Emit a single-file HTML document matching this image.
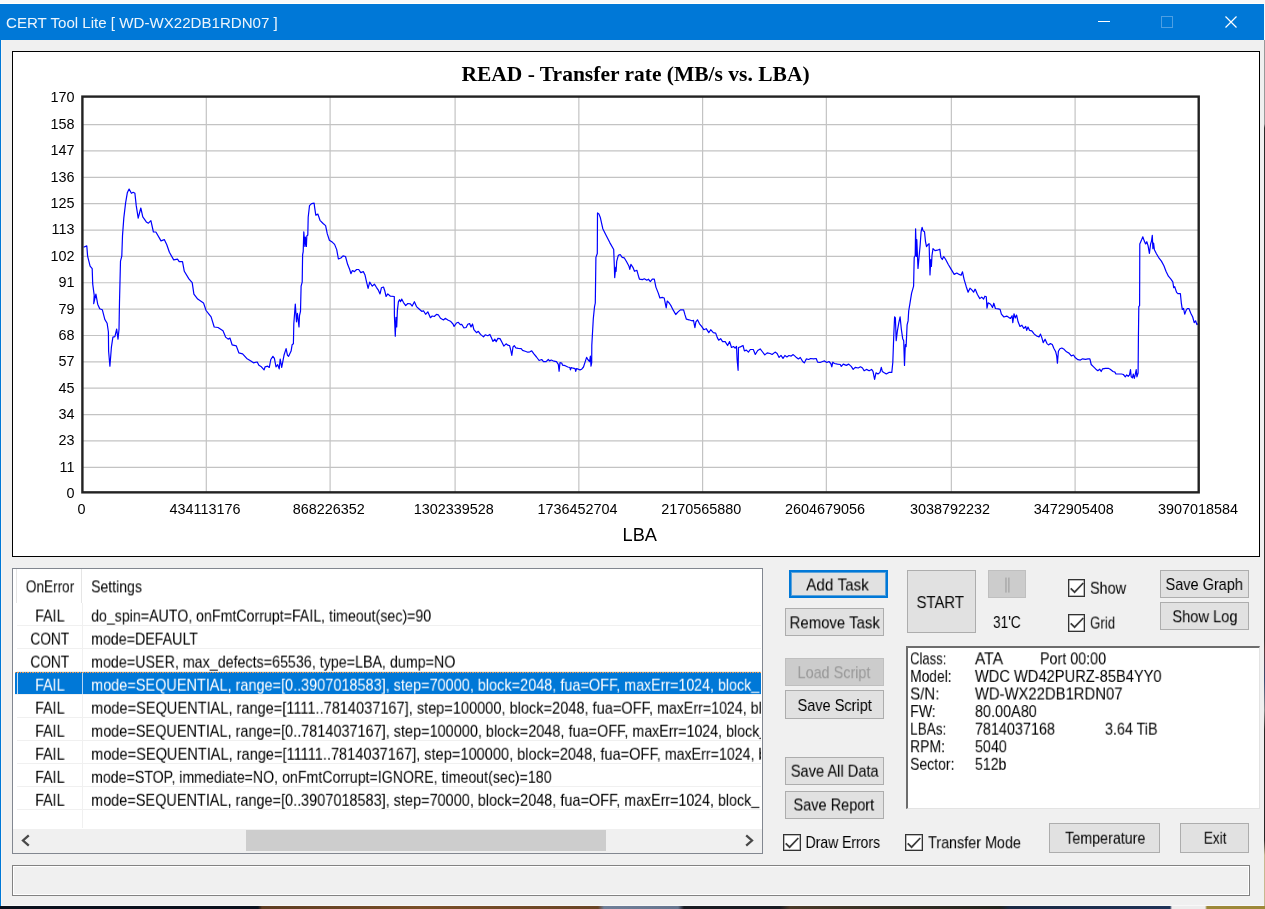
<!DOCTYPE html>
<html lang="en">
<head>
<meta charset="utf-8">
<title>CERT Tool Lite [ WD-WX22DB1RDN07 ]</title>
<style>
*{box-sizing:border-box;margin:0;padding:0}
html,body{width:1265px;height:909px;overflow:hidden;background:#f9f9f9}
body{position:relative;font-family:"Liberation Sans",sans-serif;font-size:15.5px;color:#000}
.abs{position:absolute}
.t{position:absolute;left:0;top:0;will-change:transform;white-space:pre;line-height:20px;height:20px;transform-origin:0 0;font-size:17px}
#deskr{left:1264px;top:40px;width:1px;height:869px;background:linear-gradient(180deg,#9a9a9a 0,#9a9a9a 84px,#2c2a2a 88px,#3a3432 600px,#5a3a3a 610px,#3a4a70 640px,#8a8a8a 670px,#2a2624 690px,#2a2624 800px,#c8b890 815px,#c8b890 869px)}
#deskb{left:0;top:906px;width:1265px;height:3px;background:linear-gradient(90deg,#0b111d 0,#0b111d 258px,#5d3d22 262px,#7a4f28 420px,#6a4526 598px,#707f98 604px,#66758e 678px,#1a1c22 684px,#1a1c22 780px,#4a3a28 790px,#3a3226 870px,#22241f 1000px,#1b2a44 1010px,#1f3358 1170px,#ededed 1172px,#ededed 1205px,#9d8838 1207px,#9d8838 1265px)}
#win{left:0;top:4px;width:1264px;height:902px;background:#f0f0f0;border-left:1px solid #0078d7;box-shadow:inset 1px 0 #f8f5f2,inset 0 -1px #f8f8f8}
#topw{left:0;top:3px;width:1265px;height:1px;background:#fffffc}
#tbar{left:0;top:4px;width:1264px;height:36px;background:#0078d7;color:rgba(255,255,255,.93)}
#ttext{will-change:transform;transform:translateY(.8px);left:6px;top:9px;font-size:15.1px;white-space:nowrap;line-height:18px}
#chart{left:12px;top:51px;width:1248px;height:506px;background:#fff;border:1px solid #000}
.btn{position:absolute;background:#e1e1e1;border:1px solid #adadad}
.btn.dis{background:#cccccc;border-color:#bfbfbf}
.btn.focus{border:2px solid #0078d7;box-shadow:inset 0 0 0 1px rgba(0,120,215,.6)}
.cb{position:absolute;width:17.5px;height:17.5px;background:#fff;border:1px solid #333;box-shadow:inset 0 0 0 .5px #777}
.cb svg{display:block;position:absolute;left:-1px;top:-1px}
#list{left:12px;top:568px;width:751px;height:286px;background:#fff;border:1px solid #828790;overflow:hidden}
#list .hl{width:1px;background:#e5e5e5}
.row{position:absolute;left:4px;width:744px;white-space:nowrap;overflow:hidden;border-bottom:1px solid #f0f0f0}
.row .c2{position:absolute;left:70px;top:0;height:23px;width:677px;overflow:hidden}
.row .vs{position:absolute;left:65px;top:0;width:1px;height:23px;background:#f0f0f0}
.row.sel{background:#0078d7;background-clip:padding-box;left:2px;width:746px}
.row.sel .c2{left:72px;width:674px}
.row.sel>.t{margin-left:2px}
.row.sel .vs{left:67px;background:#b5d5f3}
.row.sel::before{content:'';position:absolute;left:2px;top:0;width:1px;height:23px;background:#c5def5}
.row.sel::after{content:'';position:absolute;left:0;top:0;width:746px;height:1px;background:repeating-linear-gradient(90deg,#ee9a55 0,#ee9a55 1.25px,#0078d7 1.25px,#0078d7 2.5px)}
#hsb{left:0;top:260px;width:749px;height:24px;background:#f0f0f0}
#thumb{left:233px;top:1px;width:360px;height:21px;background:#cdcdcd}
#info{left:905.600px;top:646.300px;width:354.400px;height:163.200px;background:#fff;border-top:2.4px solid #6d6d6d;border-left:2.4px solid #6d6d6d;border-right:1px solid #e3e3e3;border-bottom:1px solid #e3e3e3}
#status{left:12px;top:865px;width:1238px;height:31px;border:1px solid #828282;box-shadow:inset 1px 1px 0 #fff,inset -1px -1px 0 #fff}
.u{font-style:normal;position:relative;top:-1.5px}

</style>
</head>
<body>
<div id="deskr" class="abs"></div>
<div id="deskb" class="abs"></div>
<div id="topw" class="abs"></div>
<div id="win" class="abs"></div>
<div id="tbar" class="abs">
<div id="ttext" class="abs">CERT Tool Lite [ WD-WX22DB1RDN07 ]</div>
<svg class="abs" style="left:1087px;top:0" width="177" height="36" viewBox="0 0 177 36">
<path d="M11 17.500H23" stroke="#fff" stroke-width="1" fill="none"/>
<rect x="74.500" y="12.500" width="11" height="11" stroke="#4d9fe3" stroke-width="1" fill="none"/>
<path d="M138.500 12.500L149.500 23.500M149.500 12.500L138.500 23.500" stroke="#fff" stroke-width="1.2" fill="none"/>
</svg>
</div>
<div id="chart" class="abs"></div>
<svg class="abs" style="left:0;top:0;will-change:transform" width="1265" height="560" viewBox="0 0 1265 560" font-family="'Liberation Sans',sans-serif" font-size="14.4" fill="#000">
<g stroke="#c3c3c3" stroke-width="1.2">
<line x1="206.30" y1="96.60" x2="206.30" y2="492.35"/>
<line x1="330.10" y1="96.60" x2="330.10" y2="492.35"/>
<line x1="455.10" y1="96.60" x2="455.10" y2="492.35"/>
<line x1="578.85" y1="96.60" x2="578.85" y2="492.35"/>
<line x1="702.60" y1="96.60" x2="702.60" y2="492.35"/>
<line x1="826.35" y1="96.60" x2="826.35" y2="492.35"/>
<line x1="951.35" y1="96.60" x2="951.35" y2="492.35"/>
<line x1="1075.10" y1="96.60" x2="1075.10" y2="492.35"/>
<line x1="82.40" y1="124.60" x2="1198.70" y2="124.60"/>
<line x1="82.40" y1="150.96" x2="1198.70" y2="150.96"/>
<line x1="82.40" y1="177.32" x2="1198.70" y2="177.32"/>
<line x1="82.40" y1="203.68" x2="1198.70" y2="203.68"/>
<line x1="82.40" y1="230.04" x2="1198.70" y2="230.04"/>
<line x1="82.40" y1="256.40" x2="1198.70" y2="256.40"/>
<line x1="82.40" y1="282.76" x2="1198.70" y2="282.76"/>
<line x1="82.40" y1="309.12" x2="1198.70" y2="309.12"/>
<line x1="82.40" y1="335.48" x2="1198.70" y2="335.48"/>
<line x1="82.40" y1="361.84" x2="1198.70" y2="361.84"/>
<line x1="82.40" y1="388.20" x2="1198.70" y2="388.20"/>
<line x1="82.40" y1="414.56" x2="1198.70" y2="414.56"/>
<line x1="82.40" y1="440.92" x2="1198.70" y2="440.92"/>
<line x1="82.40" y1="467.28" x2="1198.70" y2="467.28"/>
</g>
<polyline fill="none" stroke="#0000ff" stroke-width="1.2" stroke-linejoin="round" points="83.5,247.2 86.8,245.9 87.6,256.1 90.1,266.2 92.2,268.7 92.7,283.9 94.2,295.3 93.7,303.7 95.9,294.1 97.7,304.2 99.7,308.7 102.3,309.7 104.8,319.4 107.1,323.2 108.4,332.0 108.6,351.0 109.9,366.2 111.4,347.2 112.9,337.1 114.9,336.6 116.7,329.0 118.0,339.1 119.0,329.5 119.5,301.6 120.5,261.1 121.8,256.1 122.5,235.8 123.8,218.1 125.6,202.9 127.3,192.8 129.1,189.0 131.4,193.3 133.2,192.3 134.9,193.3 136.2,205.4 138.2,218.1 140.8,208.0 142.8,216.8 146.3,221.9 148.4,223.2 150.9,220.6 153.4,232.0 155.9,232.0 161.0,240.9 164.3,239.6 166.8,244.7 169.4,252.3 173.7,259.9 177.5,259.1 179.2,261.6 182.5,261.6 184.3,271.3 188.9,278.9 192.2,282.7 193.9,294.1 197.7,299.1 203.5,302.9 206.1,310.5 209.1,314.3 211.1,316.8 214.2,327.0 218.0,327.5 223.0,330.8 225.6,337.1 228.1,339.1 230.0,338.1 232.1,344.8 236.3,345.9 238.8,352.8 242.6,353.8 246.7,358.4 250.9,361.1 253.4,362.8 257.2,362.0 258.9,365.3 261.4,366.8 264.1,369.9 265.1,366.8 267.7,366.2 269.3,367.4 270.8,359.5 272.9,356.3 274.4,358.4 276.0,366.8 277.7,364.7 279.2,368.9 280.2,359.0 281.7,367.4 284.0,355.3 286.1,348.6 287.5,355.3 288.6,356.3 291.1,351.1 292.1,344.8 293.4,343.8 293.8,323.9 295.3,304.0 296.5,321.8 297.4,313.4 299.0,327.0 299.5,315.5 300.5,311.3 301.1,286.2 302.2,282.1 302.6,254.9 303.2,251.7 303.8,231.8 304.9,246.5 305.3,237.1 306.4,246.5 306.8,236.0 307.8,235.0 308.2,217.2 309.5,205.7 311.6,203.6 314.1,203.2 314.7,207.8 315.8,215.1 317.9,214.1 320.0,220.3 323.1,223.5 325.6,225.6 327.3,233.9 329.4,240.2 332.5,242.3 334.6,244.4 336.7,249.6 338.4,259.0 340.9,258.0 343.0,255.9 345.5,256.5 347.6,264.3 349.7,269.5 350.9,273.7 352.4,270.5 354.5,271.6 356.6,269.5 358.7,269.5 360.8,272.6 363.3,271.6 364.9,274.7 366.6,282.1 368.1,288.3 369.7,282.1 372.3,286.2 374.4,284.1 376.4,287.3 378.5,290.4 380.0,293.9 381.4,287.8 383.5,287.0 384.9,291.3 386.1,296.5 387.8,293.9 390.4,296.2 394.3,296.5 394.4,315.7 395.3,336.2 396.0,317.4 396.7,327.0 397.4,310.4 398.4,301.7 399.5,299.7 400.5,301.7 401.7,299.1 403.5,302.6 405.7,305.6 407.8,303.5 410.4,303.8 412.2,306.1 414.4,301.7 416.5,306.6 419.1,309.0 421.7,311.3 423.5,310.8 425.6,314.3 427.8,311.8 430.4,317.7 432.2,316.0 434.3,316.5 436.5,314.3 438.3,314.8 440.5,318.3 443.5,320.0 445.2,318.3 447.8,320.0 450.4,321.2 453.0,324.0 454.1,326.4 456.5,323.0 458.3,322.3 460.3,324.7 461.7,324.3 463.8,327.8 466.1,327.5 467.8,324.3 469.6,323.5 471.0,327.0 472.5,324.0 473.9,329.6 476.5,332.7 478.3,331.3 480.5,334.4 483.5,336.9 485.2,334.8 487.8,335.7 489.9,334.4 491.3,337.4 493.0,341.4 494.8,339.1 496.2,341.7 497.9,338.3 500.0,338.6 501.7,341.7 503.8,346.1 506.1,343.8 507.8,345.2 509.6,345.6 510.8,350.4 511.8,355.3 513.0,347.0 514.3,345.6 515.7,347.8 518.3,348.3 521.2,348.7 522.6,350.4 525.2,351.3 527.8,352.2 529.9,351.8 531.7,350.8 533.9,353.9 536.5,357.0 539.1,360.5 541.7,359.5 543.5,361.7 546.1,361.7 548.3,359.5 549.6,360.9 551.3,360.0 553.9,361.2 556.5,361.7 558.3,364.3 559.1,371.3 560.0,362.6 561.7,363.0 562.6,365.2 565.2,365.7 567.8,367.0 569.9,367.5 570.4,369.9 571.3,367.5 573.0,368.2 575.1,368.7 575.7,371.3 576.5,368.7 578.3,369.2 580.0,369.9 581.7,369.2 583.5,367.0 584.9,362.6 586.6,357.4 587.8,359.5 589.6,361.7 590.4,356.0 591.0,366.1 591.7,362.6 591.8,345.2 593.3,318.8 594.5,306.9 595.3,303.0 595.9,257.4 597.3,253.5 597.5,212.9 598.9,213.9 600.4,217.8 602.8,228.7 605.8,234.7 609.8,242.6 613.7,249.5 614.3,265.3 614.7,277.6 615.7,267.3 616.1,271.3 616.7,261.4 618.3,255.4 620.2,254.5 622.2,257.4 624.2,257.8 626.6,261.8 629.0,266.3 629.8,269.3 630.9,264.4 632.9,267.3 634.5,271.3 636.9,270.3 638.5,276.2 639.5,279.2 642.4,279.6 644.4,278.8 646.8,280.2 648.4,279.2 650.3,281.6 652.3,279.2 654.3,279.2 655.9,287.1 658.3,293.1 659.9,298.0 662.2,297.4 664.2,298.0 666.2,307.9 667.2,301.0 669.2,303.0 671.1,305.9 673.1,309.9 675.7,314.5 678.1,311.9 680.4,309.9 683.6,309.9 685.0,314.9 686.4,319.2 689.0,319.8 691.9,320.8 693.5,320.4 694.9,327.7 695.9,321.8 697.5,319.8 699.5,323.8 701.8,326.7 703.8,329.7 706.2,328.7 708.8,332.7 710.7,329.7 713.3,332.7 715.7,333.1 717.3,337.6 718.7,340.2 720.6,338.6 722.6,341.6 725.2,341.6 727.6,345.5 729.6,341.6 731.5,347.5 733.5,346.5 735.1,348.1 736.5,346.5 737.1,359.4 738.1,370.3 738.5,347.5 740.4,346.9 743.0,345.5 744.4,350.9 746.4,350.1 748.4,352.1 750.3,349.5 753.3,349.5 755.3,354.5 757.7,350.5 760.2,348.9 762.2,351.5 764.8,354.9 767.2,352.9 770.1,353.5 772.1,354.5 775.1,352.1 777.1,353.5 779.1,357.4 781.0,355.4 783.0,358.4 784.9,355.5 786.9,356.9 788.9,355.5 791.2,356.1 793.2,354.6 795.8,356.9 798.4,358.9 800.3,357.5 802.7,361.5 804.3,362.9 806.3,358.9 808.7,359.5 810.6,358.5 813.6,358.9 816.2,358.5 817.6,362.1 820.1,362.5 822.5,361.5 824.5,360.9 826.9,362.5 828.9,361.5 830.8,363.5 831.8,366.8 832.8,362.1 834.4,363.5 837.4,364.1 840.3,364.5 841.3,366.4 843.3,364.1 846.3,365.4 848.7,364.1 851.2,366.4 853.2,369.4 855.2,367.4 858.2,368.0 860.5,366.8 862.5,368.0 864.1,370.8 866.5,369.4 869.1,370.8 871.6,369.4 873.0,371.4 874.6,379.3 876.0,372.8 878.0,374.0 880.0,372.4 881.3,367.4 882.3,371.4 884.3,372.8 886.3,374.0 888.9,372.4 891.8,372.4 892.8,362.5 893.8,334.8 894.6,316.9 895.4,317.9 896.2,340.7 897.4,330.8 898.8,322.9 900.1,316.9 901.3,328.8 902.7,338.7 903.7,340.7 904.5,365.4 905.3,344.7 906.1,346.6 907.1,324.9 908.1,320.9 908.7,311.0 910.0,303.1 911.6,293.2 913.6,286.2 914.2,257.5 915.2,255.5 915.6,228.8 916.4,256.5 916.8,239.7 918.0,268.4 919.2,255.5 920.1,245.6 921.1,231.8 922.1,227.4 923.1,230.8 924.5,231.8 925.5,241.7 926.5,246.6 927.9,244.7 929.1,243.7 930.0,275.0 930.8,259.5 931.4,266.4 932.0,255.5 933.0,248.6 935.0,250.6 937.4,250.2 939.8,249.2 940.9,257.5 942.3,259.5 943.7,256.5 945.7,259.5 948.3,264.5 951.2,269.4 954.2,274.4 956.8,273.0 959.2,274.4 961.1,275.3 962.5,271.8 964.1,279.3 966.1,286.2 968.1,292.2 970.0,288.2 972.0,290.2 973.6,292.2 975.0,289.2 975.4,289.5 977.3,294.3 979.8,298.6 981.7,297.1 983.6,299.0 984.9,296.2 986.3,296.7 987.0,308.1 988.1,302.8 990.6,304.3 992.5,307.5 993.8,303.2 995.4,308.5 998.2,308.9 1000.1,309.4 1001.4,314.2 1003.9,317.0 1006.7,316.1 1009.0,317.6 1010.5,318.4 1012.1,315.7 1012.8,322.7 1014.0,313.8 1015.3,318.0 1016.6,315.1 1018.1,321.8 1020.0,326.5 1021.9,325.2 1023.8,328.4 1025.7,326.5 1026.7,330.3 1028.0,327.1 1029.5,330.3 1031.8,330.9 1034.3,334.1 1036.7,336.0 1039.0,337.0 1040.5,334.1 1041.9,337.9 1043.2,342.6 1045.1,339.2 1047.0,343.6 1048.5,344.9 1050.4,343.6 1052.3,344.5 1053.8,348.3 1055.7,351.8 1056.7,355.9 1057.4,363.1 1058.4,351.2 1059.9,348.7 1061.8,348.0 1064.1,349.3 1066.5,351.8 1069.0,353.1 1071.3,355.9 1073.5,355.0 1075.4,357.8 1077.9,359.7 1080.4,360.1 1082.6,358.8 1085.5,359.3 1088.0,358.8 1089.9,358.8 1091.2,364.5 1093.1,366.4 1095.9,369.2 1097.8,370.7 1099.7,369.2 1101.2,371.5 1102.6,368.8 1105.4,368.3 1108.3,368.3 1110.2,369.2 1113.0,371.5 1114.9,372.1 1115.9,374.0 1118.7,374.0 1121.5,374.0 1123.4,374.5 1125.3,376.8 1126.7,374.9 1128.2,376.4 1129.5,374.9 1130.5,369.6 1131.2,376.8 1132.4,377.8 1133.3,374.0 1134.3,378.3 1135.2,374.9 1136.2,369.6 1136.9,376.8 1138.1,373.0 1138.4,338.9 1138.8,306.6 1139.6,305.6 1139.8,244.0 1141.1,241.1 1142.8,236.8 1144.3,241.1 1145.6,244.0 1146.8,241.7 1148.1,245.9 1149.4,253.5 1150.6,244.0 1151.5,241.1 1152.3,235.4 1152.9,248.7 1153.6,243.0 1154.4,249.7 1156.3,253.5 1158.5,257.3 1161.4,261.1 1163.9,265.8 1166.1,271.5 1168.4,276.2 1170.9,279.1 1172.8,281.9 1173.7,287.6 1174.7,286.7 1176.6,292.4 1177.9,293.7 1180.4,293.7 1181.3,302.8 1182.3,309.4 1183.6,308.5 1184.7,314.2 1186.1,310.4 1187.4,308.5 1188.9,308.5 1190.8,313.2 1192.7,317.0 1194.2,322.7 1195.6,320.8 1196.9,324.6 1198.0,323.7"/>
<rect x="82.40" y="96.60" width="1116.30" height="395.75" fill="none" stroke="#222" stroke-width="2.4"/>
<text x="635.5" y="81" text-anchor="middle" font-family="'Liberation Serif',serif" font-weight="bold" font-size="21.5">READ - Transfer rate (MB/s vs. LBA)</text>
<g text-anchor="end">
<text x="74.5" y="101.8">170</text>
<text x="74.5" y="128.9">158</text>
<text x="74.5" y="155.3">147</text>
<text x="74.5" y="181.7">136</text>
<text x="74.5" y="208.0">125</text>
<text x="74.5" y="234.4">113</text>
<text x="74.5" y="260.8">102</text>
<text x="74.5" y="287.1">91</text>
<text x="74.5" y="313.5">79</text>
<text x="74.5" y="339.8">68</text>
<text x="74.5" y="366.2">57</text>
<text x="74.5" y="392.6">45</text>
<text x="74.5" y="418.9">34</text>
<text x="74.5" y="445.3">23</text>
<text x="74.5" y="471.6">11</text>
<text x="74.5" y="498.0">0</text>
</g>
<g text-anchor="middle">
<text x="81.6" y="513.6">0</text>
<text x="205.0" y="513.6">434113176</text>
<text x="328.8" y="513.6">868226352</text>
<text x="453.8" y="513.6">1302339528</text>
<text x="577.6" y="513.6">1736452704</text>
<text x="701.3" y="513.6">2170565880</text>
<text x="825.1" y="513.6">2604679056</text>
<text x="950.1" y="513.6">3038792232</text>
<text x="1073.8" y="513.6">3472905408</text>
<text x="1198.0" y="513.6">3907018584</text>
<text x="639.8" y="541" font-size="18.2">LBA</text>
</g>
</svg>
<div id="list" class="abs">
<div class="abs hl" style="left:3px;top:0;height:34px"></div>
<div class="abs hl" style="left:68px;top:0;height:34px"></div>
<span class="t" style="transform:translate(12.80px,8.35px) scaleX(0.8009)">OnError</span>
<span class="t" style="transform:translate(78.10px,8.35px) scaleX(0.8266)">Settings</span>
<div class="row" style="top:34px;height:23px">
<span class="t" style="transform:translate(18.15px,3.55px) scaleX(0.8387)">FAIL</span>
<div class="c2"><span class="t" style="transform:translate(4.10px,3.55px) scaleX(0.8346)">do_spin=AUTO, onFmtCorrupt=FAIL, timeout(sec)=90</span></div>
<div class="vs"></div>
</div>
<div class="row" style="top:57px;height:23px">
<span class="t" style="transform:translate(13.40px,3.58px) scaleX(0.8051)">CONT</span>
<div class="c2"><span class="t" style="transform:translate(4.10px,3.58px) scaleX(0.8368)">mode=DEFAULT</span></div>
<div class="vs"></div>
</div>
<div class="row" style="top:80px;height:23px">
<span class="t" style="transform:translate(13.40px,3.61px) scaleX(0.8051)">CONT</span>
<div class="c2"><span class="t" style="transform:translate(4.10px,3.61px) scaleX(0.8399)">mode=USER, max_defects=65536, type=LBA, dump=NO</span></div>
<div class="vs"></div>
</div>
<div class="row sel" style="top:103px;height:23px">
<span class="t" style="transform:translate(18.15px,3.64px) scaleX(0.8387);color:#fff">FAIL</span>
<div class="c2"><span class="t" style="transform:translate(4.10px,3.64px) scaleX(0.8516);color:#fff">mode=SEQUENTIAL, range=[0..3907018583], step=70000, block=2048, fua=OFF, </span><span class="t" style="transform:translate(537.30px,3.64px) scaleX(0.8362);color:#fff">maxErr=1024, block<i class="u">_</i></span></div>
<div class="vs"></div>
</div>
<div class="row" style="top:126px;height:23px">
<span class="t" style="transform:translate(18.15px,3.67px) scaleX(0.8387)">FAIL</span>
<div class="c2"><span class="t" style="transform:translate(4.10px,3.67px) scaleX(0.8572)">mode=SEQUENTIAL, range=[1111..7814037167], step=100000, block=2048, fua=OFF, </span><span class="t" style="transform:translate(570.00px,3.67px) scaleX(0.8362)">maxErr=1024, block<i class="u">_</i></span></div>
<div class="vs"></div>
</div>
<div class="row" style="top:149px;height:23px">
<span class="t" style="transform:translate(18.15px,3.70px) scaleX(0.8387)">FAIL</span>
<div class="c2"><span class="t" style="transform:translate(4.10px,3.70px) scaleX(0.8517)">mode=SEQUENTIAL, range=[0..7814037167], step=100000, block=2048, fua=OFF, </span><span class="t" style="transform:translate(545.40px,3.70px) scaleX(0.8362)">maxErr=1024, block<i class="u">_</i></span></div>
<div class="vs"></div>
</div>
<div class="row" style="top:172px;height:23px">
<span class="t" style="transform:translate(18.15px,3.73px) scaleX(0.8387)">FAIL</span>
<div class="c2"><span class="t" style="transform:translate(4.10px,3.73px) scaleX(0.8584)">mode=SEQUENTIAL, range=[11111..7814037167], step=100000, block=2048, fua=OFF, </span><span class="t" style="transform:translate(577.80px,3.73px) scaleX(0.8362)">maxErr=1024, block<i class="u">_</i></span></div>
<div class="vs"></div>
</div>
<div class="row" style="top:195px;height:23px">
<span class="t" style="transform:translate(18.15px,3.76px) scaleX(0.8387)">FAIL</span>
<div class="c2"><span class="t" style="transform:translate(4.10px,3.76px) scaleX(0.8339)">mode=STOP, immediate=NO, onFmtCorrupt=IGNORE, timeout(sec)=180</span></div>
<div class="vs"></div>
</div>
<div class="row" style="top:218px;height:23px">
<span class="t" style="transform:translate(18.15px,3.79px) scaleX(0.8387)">FAIL</span>
<div class="c2"><span class="t" style="transform:translate(4.10px,3.79px) scaleX(0.8516)">mode=SEQUENTIAL, range=[0..3907018583], step=70000, block=2048, fua=OFF, </span><span class="t" style="transform:translate(537.30px,3.79px) scaleX(0.8362)">maxErr=1024, block<i class="u">_</i></span></div>
<div class="vs"></div>
</div>
<div class="abs" style="left:69px;top:241px;width:1px;height:18px;background:#f0f0f0"></div>
<div id="hsb" class="abs"><svg class="abs" style="left:0;top:0" width="749" height="24" viewBox="0 0 749 24"><path d="M15.800 6.300L10 11.500L15.800 16.700" fill="none" stroke="#484848" stroke-width="2.3"/><path d="M733.200 6.300L739 11.500L733.200 16.700" fill="none" stroke="#484848" stroke-width="2.3"/></svg><div id="thumb" class="abs"></div></div>
</div>
<div class="btn focus" style="left:789.0px;top:569.5px;width:99.0px;height:28.5px"></div>
<span class="t" style="transform:translate(806.20px,575.45px) scaleX(0.9010)">Add Task</span>
<div class="btn " style="left:785.0px;top:608.0px;width:98.5px;height:28.0px"></div>
<span class="t" style="transform:translate(789.60px,613.35px) scaleX(0.8787)">Remove Task</span>
<div class="btn dis" style="left:785.0px;top:658.0px;width:98.5px;height:28.0px"></div>
<span class="t" style="transform:translate(797.60px,663.25px) scaleX(0.8463);color:#979797">Load Script</span>
<div class="btn " style="left:785.0px;top:690.0px;width:98.5px;height:28.5px"></div>
<span class="t" style="transform:translate(797.60px,695.95px) scaleX(0.8533)">Save Script</span>
<div class="btn " style="left:785.0px;top:757.0px;width:98.5px;height:28.0px"></div>
<span class="t" style="transform:translate(790.80px,761.65px) scaleX(0.8601)">Save All Data</span>
<div class="btn " style="left:785.0px;top:791.0px;width:98.5px;height:28.0px"></div>
<span class="t" style="transform:translate(793.50px,795.45px) scaleX(0.8538)">Save Report</span>
<div class="btn " style="left:907.0px;top:570.0px;width:69.0px;height:63.0px"></div>
<span class="t" style="transform:translate(916.60px,593.05px) scaleX(0.8736)">START</span>
<div class="btn dis" style="left:988.0px;top:570.0px;width:38.0px;height:28.0px"></div>
<span class="t" style="transform:translate(1004.50px,574.55px) scaleX(0.6561);color:#979797">||</span>
<div class="btn " style="left:1160.0px;top:570.0px;width:89.0px;height:27.5px"></div>
<span class="t" style="transform:translate(1165.60px,574.95px) scaleX(0.8523)">Save Graph</span>
<div class="btn " style="left:1160.0px;top:602.0px;width:89.0px;height:28.0px"></div>
<span class="t" style="transform:translate(1172.40px,607.25px) scaleX(0.8605)">Show Log</span>
<div class="btn " style="left:1049.0px;top:823.0px;width:111.0px;height:30.0px"></div>
<span class="t" style="transform:translate(1065.20px,828.75px) scaleX(0.8402)">Temperature</span>
<div class="btn " style="left:1180.4px;top:823.0px;width:68.6px;height:30.0px"></div>
<span class="t" style="transform:translate(1203.80px,828.75px) scaleX(0.8020)">Exit</span>
<div class="cb" style="left:1067.5px;top:579.2px"><svg width="18" height="18" viewBox="0 0 18 18"><path d="M2.700 9.300L6.600 13.200L15.300 4" fill="none" stroke="#3c3c3c" stroke-width="1.8"/></svg></div>
<span class="t" style="transform:translate(1090.00px,578.75px) scaleX(0.8477)">Show</span>
<div class="cb" style="left:1067.5px;top:614.4px"><svg width="18" height="18" viewBox="0 0 18 18"><path d="M2.700 9.300L6.600 13.200L15.300 4" fill="none" stroke="#3c3c3c" stroke-width="1.8"/></svg></div>
<span class="t" style="transform:translate(1090.00px,613.55px) scaleX(0.7812)">Grid</span>
<div class="cb" style="left:783.3px;top:833.8px"><svg width="18" height="18" viewBox="0 0 18 18"><path d="M2.700 9.300L6.600 13.200L15.300 4" fill="none" stroke="#3c3c3c" stroke-width="1.8"/></svg></div>
<span class="t" style="transform:translate(805.60px,832.95px) scaleX(0.8203)">Draw Errors</span>
<div class="cb" style="left:905.3px;top:833.8px"><svg width="18" height="18" viewBox="0 0 18 18"><path d="M2.700 9.300L6.600 13.200L15.300 4" fill="none" stroke="#3c3c3c" stroke-width="1.8"/></svg></div>
<span class="t" style="transform:translate(928.10px,833.25px) scaleX(0.8444)">Transfer Mode</span>
<span class="t" style="transform:translate(993.00px,612.95px) scaleX(0.8017)">31'C</span>
<div id="info" class="abs"></div>
<span class="t" style="transform:translate(910.10px,649.35px) scaleX(0.7660)">Class:</span>
<span class="t" style="transform:translate(974.90px,649.35px) scaleX(0.9216)">ATA</span>
<span class="t" style="transform:translate(1040.00px,649.35px) scaleX(0.8425)">Port 00:00</span>
<span class="t" style="transform:translate(910.10px,666.92px) scaleX(0.8137)">Model:</span>
<span class="t" style="transform:translate(974.90px,666.92px) scaleX(0.8631)">WDC WD42PURZ-85B4YY0</span>
<span class="t" style="transform:translate(910.10px,684.49px) scaleX(0.8892)">S/N:</span>
<span class="t" style="transform:translate(974.90px,684.49px) scaleX(0.8724)">WD-WX22DB1RDN07</span>
<span class="t" style="transform:translate(910.10px,702.06px) scaleX(0.8329)">FW:</span>
<span class="t" style="transform:translate(974.90px,702.06px) scaleX(0.8507)">80.00A80</span>
<span class="t" style="transform:translate(910.10px,719.63px) scaleX(0.7975)">LBAs:</span>
<span class="t" style="transform:translate(974.90px,719.63px) scaleX(0.8464)">7814037168</span>
<span class="t" style="transform:translate(1104.90px,719.63px) scaleX(0.8447)">3.64 TiB</span>
<span class="t" style="transform:translate(910.10px,737.20px) scaleX(0.8212)">RPM:</span>
<span class="t" style="transform:translate(974.90px,737.20px) scaleX(0.8460)">5040</span>
<span class="t" style="transform:translate(910.10px,754.77px) scaleX(0.8220)">Sector:</span>
<span class="t" style="transform:translate(974.90px,754.77px) scaleX(0.8328)">512b</span>
<div id="status" class="abs"></div>
</body>
</html>
